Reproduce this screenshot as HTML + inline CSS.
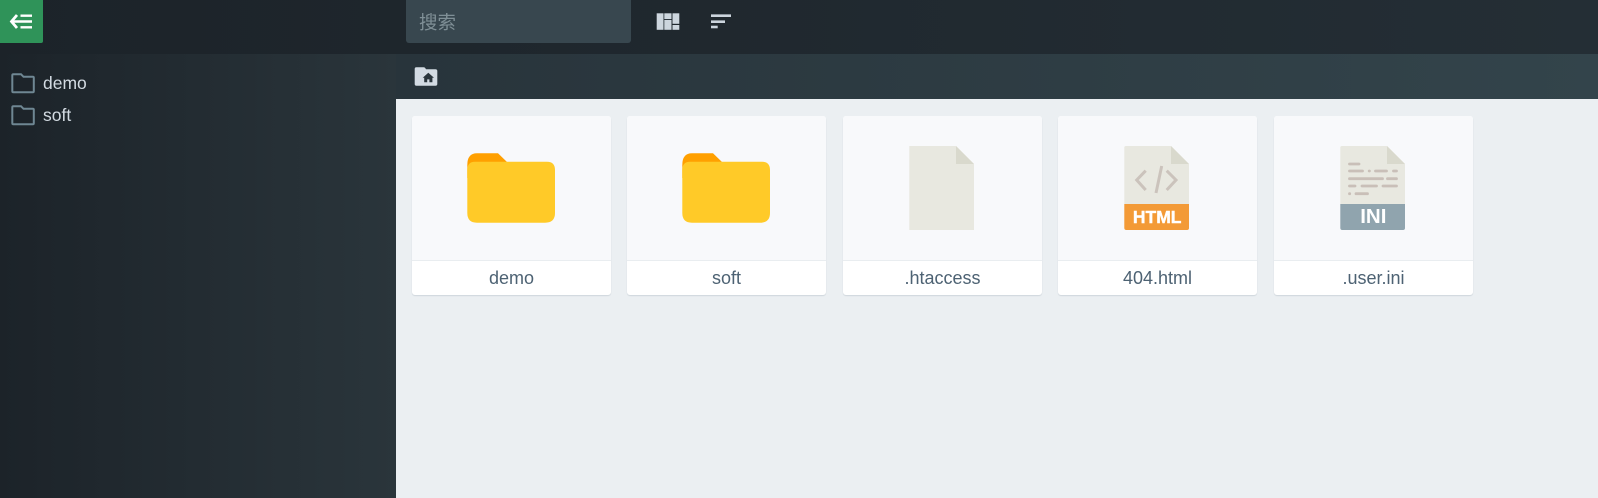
<!DOCTYPE html>
<html><head><meta charset="utf-8"><style>
html,body{margin:0;padding:0;width:1598px;height:498px;overflow:hidden;background:#ebeff2;font-family:"Liberation Sans","Noto Sans CJK SC",sans-serif}
div,svg,span{position:absolute;box-sizing:border-box}
.top{left:0;top:0;width:1598px;height:54px;background:linear-gradient(90deg,#1c2329 0%,#242e35 100%)}
.side{left:0;top:54px;width:396px;height:444px;background:linear-gradient(90deg,#1c2329 0%,#2a353b 100%)}
.bar{left:396px;top:54px;width:1202px;height:45px;background:linear-gradient(90deg,#28343b 0%,#33444b 100%)}
.btn{left:0;top:0;width:43px;height:43px;background:#2f9359;border-radius:0 0 2px 0}
.search{left:406px;top:0;width:225px;height:43px;background:#38474f;border-radius:0 0 3px 3px;color:#7f8f96;font-size:18.5px;line-height:45px;padding-left:13px}
.tree{left:43px;color:#d3dbe2;font-size:17.5px;line-height:24px;white-space:nowrap}
.card{top:116px;width:199px;height:179px;background:#fff;border-radius:3px;box-shadow:0 1px 1px #cfd6dc}
.img{left:0;top:0;width:199px;height:145px;background:#f8f9fb;border-bottom:1px solid #e9edf0;border-radius:3px 3px 0 0}
.name{left:0;top:146px;width:199px;height:33px;line-height:33px;text-align:center;color:#4d6273;font-size:18px;white-space:nowrap}
</style></head><body>
<div class="top"></div>
<div class="side"></div>
<div class="bar"></div>
<div class="btn"></div>
<svg style="left:0;top:0" width="43" height="43" viewBox="0 0 43 43"><path d="M17 15L11.5 21.5L17 28" fill="none" stroke="#fff" stroke-width="2.8"/><path d="M12 21.5H32M20.5 15.7H32M20.5 27.3H32" stroke="#fff" stroke-width="2.4" fill="none"/></svg>
<div class="search">搜索</div>
<svg style="left:656px;top:13px" width="24" height="18" viewBox="0 0 24 18"><g fill="#cdd6de"><rect x="0.7" y="0.3" width="6.8" height="16.5"/><rect x="8.3" y="0.3" width="7.2" height="5.8"/><rect x="8.3" y="7" width="7.2" height="9.8"/><rect x="16.5" y="0.3" width="6.8" height="10.5"/><rect x="16.5" y="12" width="6.8" height="4.8"/></g></svg>
<svg style="left:710px;top:13px" width="24" height="18" viewBox="0 0 24 18"><path d="M1 2.7H21" stroke="#ccd5dd" stroke-width="2.6"/><path d="M1 8.7H15" stroke="#ccd5dd" stroke-width="2.6"/><path d="M1 14H7.7" stroke="#ccd5dd" stroke-width="2.6"/></svg>
<svg style="left:414px;top:67px" width="24" height="20" viewBox="0 0 24 20"><path d="M0.7 2Q0.7 0.3 2.4 0.3H9.5Q10.5 0.3 11.2 1L12 2.2H21.5Q23.3 2.2 23.3 4V17Q23.3 18.7 21.5 18.7H2.4Q0.7 18.7 0.7 17Z" fill="#d3dbe3"/><path d="M14.3 5.7L8.7 10.8H10.2V15.3H13.2V12.4H15.4V15.3H18.4V10.8H20Z" fill="#2a353c"/></svg>
<svg style="left:11px;top:73px" width="24" height="22" viewBox="0 0 24 22"><path d="M1.3 2.2Q1.3 1.2 2.3 1.2H10L12.5 3.8H21.8Q22.8 3.8 22.8 4.8V18.3Q22.8 19.3 21.8 19.3H2.3Q1.3 19.3 1.3 18.3Z" fill="none" stroke="#6f8793" stroke-width="2"/></svg>
<svg style="left:11px;top:105px" width="24" height="22" viewBox="0 0 24 22"><path d="M1.3 2.2Q1.3 1.2 2.3 1.2H10L12.5 3.8H21.8Q22.8 3.8 22.8 4.8V18.3Q22.8 19.3 21.8 19.3H2.3Q1.3 19.3 1.3 18.3Z" fill="none" stroke="#6f8793" stroke-width="2"/></svg>
<div class="tree" style="top:71px">demo</div>
<div class="tree" style="top:103px">soft</div>

<div class="card" style="left:412px"><div class="img"></div>
<svg style="left:55px;top:37px" width="89" height="70" viewBox="0 0 89 70"><path d="M0.3 12Q0.3 0.3 10 0.3H31L40 9H79V25H0.3Z" fill="#ffa000"/><path d="M8 8.7H80Q88 8.7 88 17V60Q88 69.7 78 69.7H10Q0.3 69.7 0.3 60V17Q0.3 8.7 8 8.7Z" fill="#ffca28"/></svg>
<div class="name">demo</div></div>

<div class="card" style="left:627px"><div class="img"></div>
<svg style="left:55px;top:37px" width="89" height="70" viewBox="0 0 89 70"><path d="M0.3 12Q0.3 0.3 10 0.3H31L40 9H79V25H0.3Z" fill="#ffa000"/><path d="M8 8.7H80Q88 8.7 88 17V60Q88 69.7 78 69.7H10Q0.3 69.7 0.3 60V17Q0.3 8.7 8 8.7Z" fill="#ffca28"/></svg>
<div class="name">soft</div></div>

<div class="card" style="left:843px"><div class="img"></div>
<svg style="left:66px;top:30px" width="66" height="85" viewBox="0 0 66 85"><path d="M0.3 0H47L65 18V84H0.3Z" fill="#e8e8e0"/><path d="M47 0L65 18H47Z" fill="#d9d9cd"/></svg>
<div class="name">.htaccess</div></div>

<div class="card" style="left:1058px"><div class="img"></div>
<svg style="left:66px;top:30px" width="66" height="85" viewBox="0 0 66 85"><path d="M0.3 1.5Q0.3 0 2 0H47L65 18V58H0.3Z" fill="#e8e8e0"/><path d="M47 0L65 18H47Z" fill="#d9d9cd"/><path d="M0.3 58H65V82Q65 84 63 84H2.3Q0.3 84 0.3 82Z" fill="#f39a36"/><path d="M21.7 24.7L12.7 34L21.7 44M42.7 24.7L52 34L42.7 44M37.7 20L32 47" fill="none" stroke="#cbc3bc" stroke-width="3"/><text x="33.2" y="76.8" text-anchor="middle" font-family="Liberation Sans" font-weight="700" font-size="17.5" fill="#fff" stroke="#fff" stroke-width="0.4">HTML</text></svg>
<div class="name">404.html</div></div>

<div class="card" style="left:1274px"><div class="img"></div>
<svg style="left:66px;top:30px" width="66" height="85" viewBox="0 0 66 85"><path d="M0.3 1.5Q0.3 0 2 0H47L65 18V58H0.3Z" fill="#e8e8e0"/><path d="M47 0L65 18H47Z" fill="#d9d9cd"/><path d="M0.3 58H65V82Q65 84 63 84H2.3Q0.3 84 0.3 82Z" fill="#90a4ae"/><path d="M9.5 18H19M9.5 25H22.5M29.2 25H29.4M35.5 25H46.5M53.5 25H56.5M9.5 32.7H42.5M47.5 32.7H56.5M9.5 40H15M22 40H36.5M43 40H56.5M9.5 47.7H9.7M16 47.7H27.5" fill="none" stroke="#c9bfb8" stroke-width="2.8" stroke-linecap="round"/><text x="33.3" y="77" text-anchor="middle" font-family="Liberation Sans" font-weight="700" font-size="20.5" fill="#fff">INI</text></svg>
<div class="name">.user.ini</div></div>
</body></html>
